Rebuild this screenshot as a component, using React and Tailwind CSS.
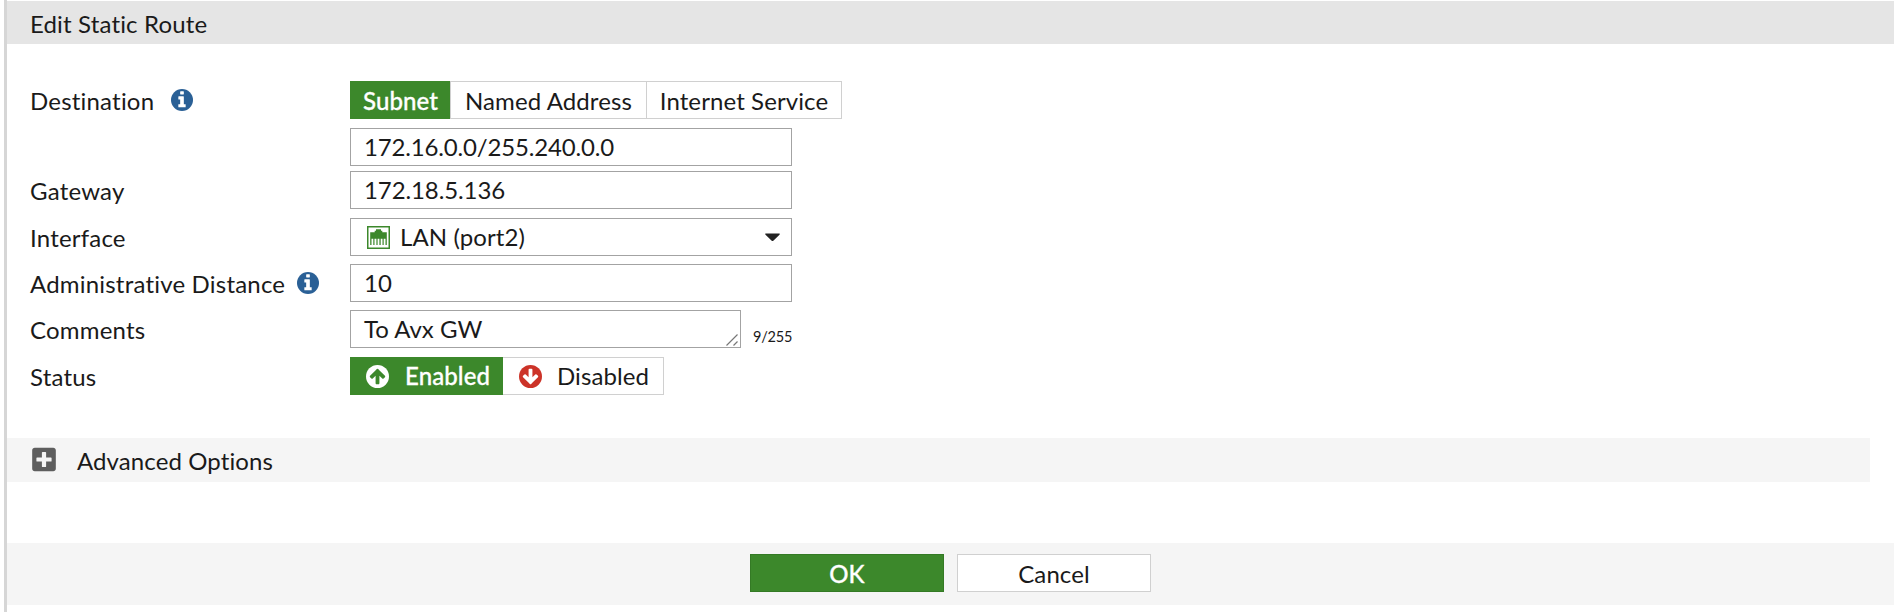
import React from "react";
import { FaPlusSquare } from "react-icons/fa";

const field = "flex h-[38px] items-center border border-[#a3a3a3] bg-white pl-[13px]";

function InfoIcon({ className }) {
  return (
    <svg width="22" height="22" viewBox="128 128 1536 1536" className={`relative -top-px shrink-0 ${className}`}>
      <circle cx="896" cy="896" r="768" fill="#2a6096" />
      <path
        fill="#fff"
        d="M1152 1376v-160q0-14-9-23t-23-9h-96v-512q0-14-9-23t-23-9h-320q-14 0-23 9t-9 23v160q0 14 9 23t23 9h96v320h-96q-14 0-23 9t-9 23v160q0 14 9 23t23 9h448q14 0 23-9t9-23zM1024 480v-160q0-14-9-23t-23-9h-192q-14 0-23 9t-9 23v160q0 14 9 23t23 9h192q14 0 23-9t9-23z"
      />
    </svg>
  );
}

function ArrowIcon({ circle, arrow, className = "" }) {
  return (
    <svg width="23" height="23" viewBox="128 128 1536 1536" className={`shrink-0 ${className}`}>
      <circle cx="896" cy="896" r="768" fill={circle} />
      <path
        fill={arrow}
        d="M1412 895q0-27-18-45l-362-362-91-91q-18-18-45-18t-45 18l-91 91-362 362q-18 18-18 45t18 45l91 91q18 18 45 18t45-18l189-189v502q0 26 19 45t45 19h128q26 0 45-19t19-45v-502l189 189q19 19 45 19t45-19l91-91q18-18 18-45z"
      />
    </svg>
  );
}

function PortIcon() {
  return (
    <svg width="23" height="23" viewBox="0 0 23 23" className="shrink-0">
      <rect x="0.75" y="0.75" width="21.5" height="21.5" fill="#fff" stroke="#3c882b" strokeWidth="1.5" />
      <path
        d="M3.200 6.200H7.700V4.800H9V3.200H14V4.800H15.300V6.200H19.800V19H18.500V12.800H16.700V19H15.500V12.800H13.700V19H12.400V12.800H10.600V19H9.400V12.800H7.500V19H6.300V12.800H4.500V19H3.200z"
        fill="#3c882b"
      />
    </svg>
  );
}

function Row({ label, info, infoGap = "ml-[16px]", className = "", children }) {
  return (
    <div className={`flex h-[38px] items-center ${className}`}>
      <div className="flex w-[320px] shrink-0 items-center whitespace-nowrap pt-px tracking-[0.2px]">
        {label}
        {info && <InfoIcon className={infoGap} />}
      </div>
      {children}
    </div>
  );
}

export default function App() {
  return (
    <div className="h-[612px] w-full overflow-hidden bg-white pl-[4px] font-['Lato',sans-serif] text-[24px] leading-[38px] tracking-[0.1px] text-[#1a1a1a] [font-variant-ligatures:none]">
      <div className="flex h-full flex-col border-l-[3px] border-[#d6d6d6] pt-px">
        <header className="flex h-[43px] shrink-0 items-center bg-[#e5e5e5] pl-[23px] pt-[2px] tracking-[0.16px]">Edit Static Route</header>

        <main className="flex flex-col pl-[23px] pt-[37px]">
          <Row label="Destination" info infoGap="ml-[17px]">
            <div className="flex h-[38px] items-stretch leading-[36px]">
              <button className="w-[100px] bg-[#3c882b] pl-px pt-px font-medium text-white [-webkit-text-stroke:0.3px_white]">Subnet</button>
              <button className="flex w-[197px] items-center justify-center border border-[#d0d0d0] pt-px">Named Address</button>
              <button className="flex w-[195px] items-center justify-center border border-l-0 border-[#d0d0d0] pt-px">Internet Service</button>
            </div>
          </Row>
          <Row className="mt-[9px]">
            <div className={`${field} w-[442px] tracking-[-0.16px]`}>172.16.0.0/255.240.0.0</div>
          </Row>
          <Row label="Gateway" className="mt-[5px]">
            <div className={`${field} w-[442px] tracking-[-0.1px]`}>172.18.5.136</div>
          </Row>
          <Row label="Interface" className="mt-[9px]">
            <div className={`${field} w-[442px] pl-[16px] pr-[11px]`}>
              <PortIcon />
              <span className="ml-[10px] flex-1">LAN (port2)</span>
              <svg width="15" height="9" viewBox="0 0 15 9">
                <path d="M1 0.500h13c.8 0 1 .6.500 1.200L8.300 7.700c-.5.500-1.100.5-1.600 0L.5 1.700C0 1.100.2.500 1 .5z" fill="#222" />
              </svg>
            </div>
          </Row>
          <Row label="Administrative Distance" info infoGap="ml-[12px]" className="mt-[8px]">
            <div className={`${field} w-[442px]`}>10</div>
          </Row>
          <Row label="Comments" className="mt-[8px]">
            <div className={`${field} w-[391px] justify-between tracking-normal`}>
              To Avx GW
              <svg width="13" height="13" viewBox="0 0 13 13" className="mr-[1px] self-end" stroke="#777" strokeWidth="1.200">
                <path d="M0.500 11.500L11.500 0.500M7.500 11.500L11.500 7.500" fill="none" />
              </svg>
            </div>
            <span className="ml-[12px] mt-[16px] text-[14.500px] leading-5 tracking-[-0.2px]">9/255</span>
          </Row>
          <Row label="Status" className="mt-[9px]">
            <div className="flex h-[38px] items-stretch">
              <button className="flex w-[153px] items-center bg-[#3c882b] pl-[16px] font-medium text-white [-webkit-text-stroke:0.3px_white]">
                <ArrowIcon circle="#fff" arrow="#3c882b" />
                <span className="ml-[16px]">Enabled</span>
              </button>
              <button className="flex w-[161px] items-center border border-l-0 border-[#d0d0d0] pl-[16px]">
                <ArrowIcon circle="#cc3328" arrow="#fff" className="rotate-180" />
                <span className="ml-[15px]">Disabled</span>
              </button>
            </div>
          </Row>
        </main>

        <section className="mr-6 mt-[43px] flex h-[44px] shrink-0 items-center bg-[#f5f5f5] pl-[25px]">
          <FaPlusSquare className="relative -top-px h-[27px] w-[24px] text-[#5e5e5e]" />
          <span className="ml-[21px] mt-px">Advanced Options</span>
        </section>

        <footer className="mt-[61px] flex h-[62px] shrink-0 items-center justify-center gap-[13px] bg-[#f5f5f5] pb-[2px]">
          <button className="h-[38px] w-[194px] border border-[#347a25] bg-[#3c882b] pt-px font-medium leading-[35px] text-white [-webkit-text-stroke:0.3px_white]">OK</button>
          <button className="h-[38px] w-[194px] border border-[#d0d0d0] bg-white pt-px leading-[35px]">Cancel</button>
        </footer>
      </div>
    </div>
  );
}
